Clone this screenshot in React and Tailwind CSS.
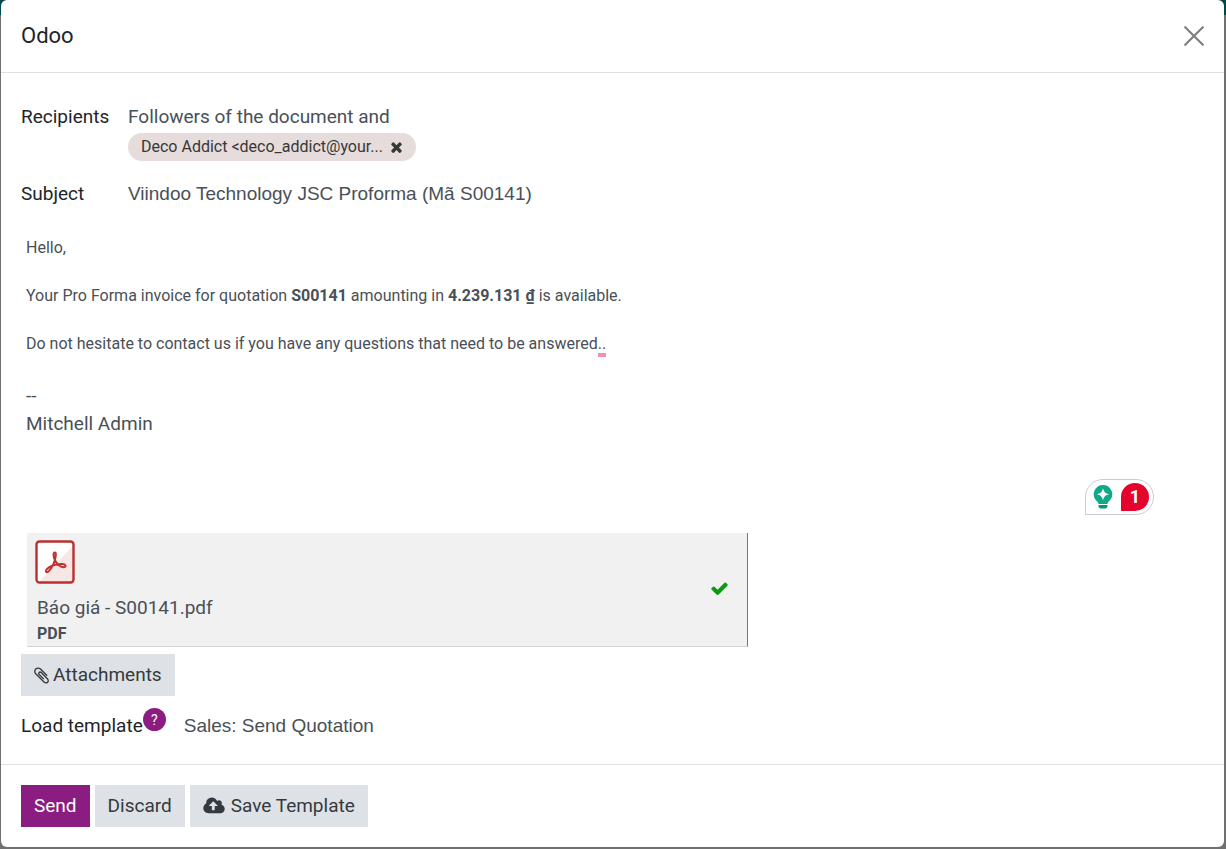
import { useState } from 'react';

function Icon({ viewBox, className, d }) {
    return (
        <svg viewBox={viewBox} className={className} fill="currentColor" aria-hidden="true">
            <path d={d} />
        </svg>
    );
}

const icons = {
    times: 'M1298 1322q0 40-28 68l-136 136q-28 28-68 28t-68-28l-294-294-294 294q-28 28-68 28t-68-28l-136-136q-28-28-28-68t28-68l294-294-294-294q-28-28-28-68t28-68l136-136q28-28 68-28t68 28l294 294 294-294q28-28 68-28t68 28l136 136q28 28 28 68t-28 68l-294 294 294 294q28 28 28 68z',
    check: 'M1671 566q0 40-28 68l-724 724-136 136q-28 28-68 28t-68-28l-136-136-362-362q-28-28-28-68t28-68l136-136q28-28 68-28t68 28l294 295 656-657q28-28 68-28t68 28l136 136q28 28 28 68z',
    paperclip: 'M1404 1385q0 117-79 196t-196 79q-135 0-235-100l-777-776q-113-115-113-271 0-159 110-270t269-111q158 0 273 113l605 606q10 10 10 22 0 16-30.5 46.5t-46.5 30.5q-13 0-23-10l-606-607q-79-77-181-77-106 0-179 75t-73 181q0 105 76 181l776 777q63 63 145 63 64 0 106-42t42-106q0-82-63-145l-581-581q-26-24-60-24-29 0-48 19t-19 48q0 32 25 59l410 410q10 10 10 22 0 16-31 47t-47 31q-12 0-22-10l-410-410q-63-61-63-149 0-82 57-139t139-57q88 0 149 63l581 581q100 98 100 235z',
    cloudUpload: 'M1280 864q0-14-9-23l-352-352q-9-9-23-9t-23 9l-351 351q-10 12-10 24 0 14 9 23t23 9h224v352q0 13 9.5 22.5t22.5 9.5h192q13 0 22.5-9.5t9.5-22.5v-352h224q13 0 22.5-9.5t9.5-22.5zm640 288q0 159-112.5 271.5t-271.5 112.5h-1088q-185 0-316.5-131.5t-131.5-316.5q0-130 70-240t188-165q-2-30-2-43 0-212 150-362t362-150q156 0 285.5 87t188.5 231q71-62 166-62 106 0 181 75t75 181q0 76-41 138 130 31 213.5 135.5t83.5 238.5z',
};

function PdfIcon() {
    return (
        <svg viewBox="0 0 40 44" className="w-10 h-11" aria-hidden="true">
            <rect x="1.5" y="1.5" width="37" height="41" rx="3" fill="#fff" />
            <path d="M38 6v33a3 3 0 0 1-3 3H4z" fill="#f6e6e6" />
            <rect x="1.5" y="1.5" width="37" height="41" rx="3" fill="none" stroke="#b9302f" strokeWidth="2.4" />
            <path
                d="M20 12.5c-2.2 0-1.8 4.5.3 8.3 2.5 4.3 6.2 6.6 8.700 6.400 2.800-.3 1.800-2.900-1.600-3.100-4.500-.2-9.500 1-13 3-2.900 1.700-4.200 3.900-3.100 4.900 1.400 1.100 4.300-2.400 6.500-6.600 2.200-4.300 4.300-12.900 2.200-12.900z"
                fill="none"
                stroke="#c0302c"
                strokeWidth="2"
                strokeLinejoin="round"
            />
        </svg>
    );
}

function GrammarBadge({ count }) {
    return (
        <div className="flex items-center gap-2 w-[69px] h-9 pl-[7px] bg-white border border-[#c9cbdb] rounded-[18px] rounded-bl-none">
            <svg viewBox="0 0 20 24" className="w-5 h-6" aria-hidden="true">
                <path d="M10 0a9.300 9.300 0 0 0-6.600 15.800c1.200 1.200 1.900 2 2.100 3.200h9c.2-1.200.9-2 2.100-3.200A9.300 9.300 0 0 0 10 0z" fill="#10a987" />
                <path d="M10 3.200c1 3.800 2.200 5 6 6-3.800 1-5 2.200-6 6-1-3.800-2.200-5-6-6 3.800-1 5-2.200 6-6z" fill="#fff" />
                <path d="M5.500 20h9v.7a2.800 2.800 0 0 1-2.800 2.800H8.300a2.800 2.800 0 0 1-2.800-2.800z" fill="#0c9479" />
            </svg>
            <span className="flex items-center justify-center size-7 rounded-full rounded-bl-none bg-[#e3052e] text-white text-[18px] font-bold">
                {count}
            </span>
        </div>
    );
}

function Button({ primary, children }) {
    const colors = primary ? 'bg-[#8a1c82] text-white' : 'bg-[#dee2e6] text-[#343a40]';
    return (
        <button type="button" className={`flex items-center h-[42px] px-[13px] ${colors}`}>
            {children}
        </button>
    );
}

function App() {
    const [subject, setSubject] = useState('Viindoo Technology JSC Proforma (Mã S00141)');
    const [template, setTemplate] = useState('Sales: Send Quotation');

    return (
        <div className="min-h-screen flex pl-px pr-0.5 pb-0.5 bg-[linear-gradient(#00474b_15px,#707070_15px)] font-[Roboto,sans-serif] text-[19px] leading-7 text-[#495057]">
            <div role="dialog" aria-labelledby="dialog-title" className="flex flex-col flex-1 min-w-0 bg-white rounded-md">
                <header className="flex items-center justify-between h-[73px] px-5 border-b border-[#dee2e6]">
                    <h4 id="dialog-title" className="text-[22px] text-[#212529]">Odoo</h4>
                    <button type="button" aria-label="Close" className="text-[#808080]">
                        <svg viewBox="0 0 20 20" className="size-5" fill="none" stroke="currentColor" strokeWidth="2.2" strokeLinecap="round">
                            <path d="M1.200 1.200l17.600 17.600M18.800 1.200L1.200 18.800" />
                        </svg>
                    </button>
                </header>

                <main className="flex-1 px-5 pt-[30px] pb-6">
                    <div className="grid grid-cols-[107px_1fr]">
                        <span className="text-[#212529]">Recipients</span>
                        <div>
                            <p>Followers of the document and</p>
                            <span className="inline-flex items-center gap-[7px] h-7 mt-0.5 px-[13px] rounded-full bg-[#e6dcdc] text-[16px] text-[#373737] align-top">
                                Deco Addict &lt;deco_addict@your...
                                <button type="button" aria-label="Remove Deco Addict">
                                    <Icon viewBox="0 0 1408 1792" className="w-[13px] h-4" d={icons.times} />
                                </button>
                            </span>
                        </div>
                        <label htmlFor="subject" className="mt-[19px] text-[#212529]">Subject</label>
                        <input
                            id="subject"
                            value={subject}
                            onChange={(e) => setSubject(e.target.value)}
                            className="mt-[19px] h-7 w-full outline-none font-['Liberation_Sans',sans-serif]"
                        />
                    </div>

                    {/* mail body */}
                    <div className="mt-7 px-[5px]">
                        <div className="flex flex-col gap-6 text-[16px] leading-6">
                            <p>Hello,</p>
                            <p>
                                Your Pro Forma invoice for quotation <b>S00141</b> amounting in <b>4.239.131 ₫</b> is available.
                            </p>
                            <p>
                                Do not hesitate to contact us if you have any questions that need to be answered
                                <span className="border-b-4 border-[#f191b2]">..</span>
                            </p>
                        </div>
                        <p className="mt-[26px]">--<br />Mitchell Admin</p>
                    </div>

                    <div className="flex justify-end mt-[41px] pr-[50px]">
                        <GrammarBadge count={1} />
                    </div>

                    <div className="flex justify-between max-w-[721px] mt-[18px] ml-1.5 pt-[7px] pr-[18px] pl-2 bg-[#f1f1f1] border-r border-b border-r-[#777] border-b-[#d5d5d5]">
                        <div>
                            <PdfIcon />
                            <p className="mt-2.5 pl-0.5">Báo giá - S00141.pdf</p>
                            <p className="pl-0.5 text-[16px] leading-6 font-bold">PDF</p>
                        </div>
                        <Icon viewBox="0 0 1792 1792" className="size-[19px] mt-[39px] text-[#0c9a12]" d={icons.check} />
                    </div>

                    <div className="flex mt-[7px]">
                        <Button>
                            <Icon viewBox="0 0 1408 1792" className="w-[15px] h-[19px] mr-1" d={icons.paperclip} />
                            Attachments
                        </Button>
                    </div>

                    <div className="flex mt-4">
                        <label htmlFor="template" className="text-[#212529]">Load template</label>
                        <button type="button" aria-label="Help" className="flex items-center justify-center size-[23px] -mt-1 rounded-full bg-[#8a1c82] text-white text-[14px]">
                            ?
                        </button>
                        <input
                            id="template"
                            value={template}
                            onChange={(e) => setTemplate(e.target.value)}
                            className="flex-1 min-w-0 h-7 ml-[18px] outline-none font-['Liberation_Sans',sans-serif]"
                        />
                    </div>
                </main>

                <footer className="flex gap-[5px] px-5 py-5 border-t border-[#dee2e6]">
                    <Button primary>Send</Button>
                    <Button>Discard</Button>
                    <Button>
                        <Icon viewBox="0 0 1920 1792" className="w-[22px] h-5 mr-1.5" d={icons.cloudUpload} />
                        Save Template
                    </Button>
                </footer>
            </div>
        </div>
    );
}

export default App;
